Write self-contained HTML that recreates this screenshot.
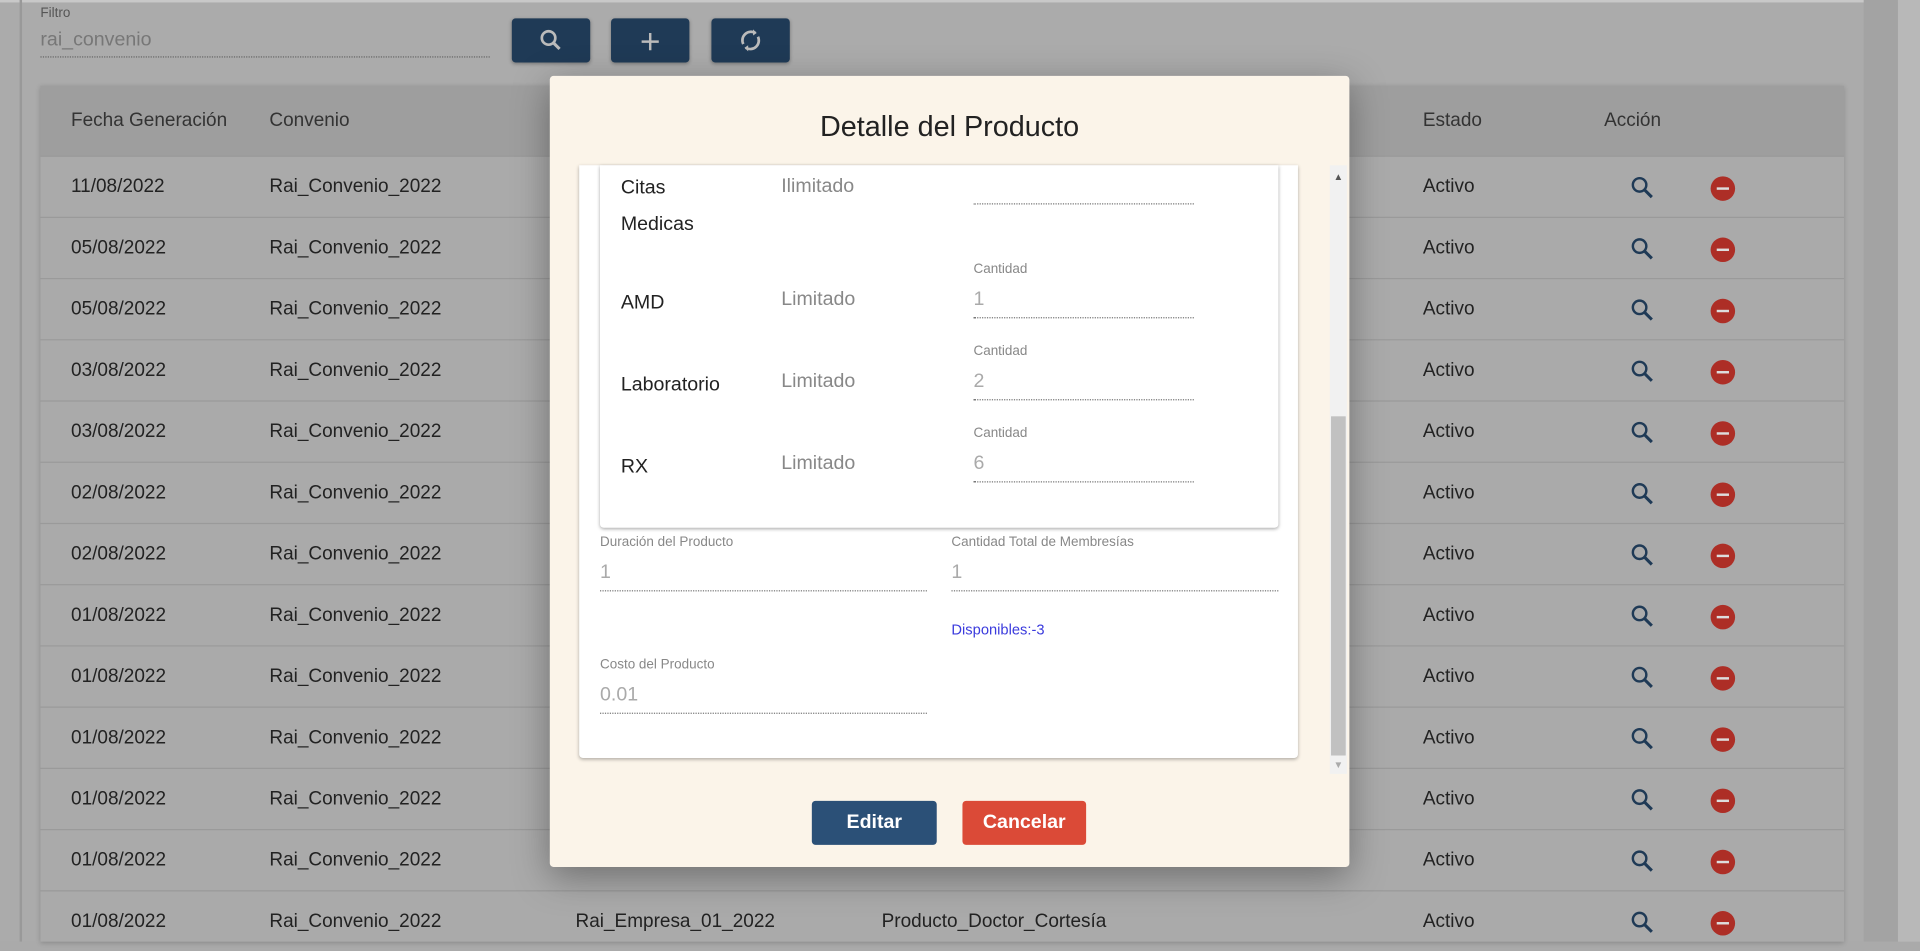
<!DOCTYPE html>
<html><head><meta charset="utf-8"><style>
*{margin:0;padding:0;box-sizing:border-box}
html,body{width:1920px;height:942px;overflow:hidden;background:#aaa;font-family:"Liberation Sans",sans-serif}
#w{position:absolute;left:0;top:0;width:1568px;height:769px;transform:scale(1.22449);transform-origin:0 0;background:#ababab}
.a{position:absolute;white-space:nowrap}
.btn{position:absolute;top:15px;width:64px;height:36px;background:#1f3a56;border-radius:3px;box-shadow:0 1px 3px rgba(0,0,0,.3)}
.row{position:absolute;left:33px;width:1473px;height:50px;border-top:1px solid #9a9a9a;font-size:15.5px;color:#222}
.row span{position:absolute;top:16px}
.dot{position:absolute;border-bottom:1px dotted #777;height:1px}
.lbl{position:absolute;font-size:11px;color:#888;white-space:nowrap}
.val{position:absolute;font-size:16px;color:#aaa;white-space:nowrap}
.mi{position:absolute;width:20px;height:20px;border-radius:50%;background:#ad2e26}
.mi:after{content:"";position:absolute;left:5px;top:9px;width:10px;height:2px;background:#ddd}
</style></head><body><div id="w">
<div class="a" style="left:0;top:0;width:1568px;height:2px;background:#c8c8c8"></div>
<div class="a" style="left:16px;top:0;width:2px;height:769px;background:#999"></div>
<div class="a" style="left:1522px;top:0;width:28px;height:769px;background:#a3a3a3"></div>
<div class="a" style="left:1550px;top:0;width:18px;height:769px;background:#b8b8b8"></div>
<div class="a" style="left:33px;top:5px;font-size:11px;color:#555">Filtro</div>
<div class="a" style="left:33px;top:24px;font-size:16px;color:#777">rai_convenio</div>
<div class="dot" style="left:33px;top:46px;width:367px;border-color:#666"></div>
<div class="btn" style="left:418px"><svg width="64" height="36"><circle cx="30" cy="16" r="5.5" fill="none" stroke="#bbb" stroke-width="2.2"/><line x1="34" y1="20" x2="39" y2="25" stroke="#bbb" stroke-width="2.5"/></svg></div>
<div class="btn" style="left:499px"><svg width="64" height="36"><path d="M32 12v14M25 19h14" stroke="#bbb" stroke-width="2"/></svg></div>
<div class="btn" style="left:581px"><svg width="64" height="36"><path d="M26 21a7 7 0 0 1 10-9M38 15a7 7 0 0 1-10 9" fill="none" stroke="#bbb" stroke-width="2.2"/><path d="M34 9l3 3-3 2zM30 27l-3-3 3-2z" fill="#bbb"/></svg></div>
<div class="a" style="left:33px;top:70px;width:1473px;height:699px;background:#aaa;box-shadow:0 1px 4px rgba(0,0,0,.2)"></div>
<div class="a" style="left:33px;top:70px;width:1473px;height:58px;background:#9e9e9e;font-size:15.5px;color:#333">
<span class="a" style="left:25px;top:20px">Fecha Generación</span><span class="a" style="left:187px;top:20px">Convenio</span><span class="a" style="left:1129px;top:20px">Estado</span><span class="a" style="left:1277px;top:20px">Acción</span></div>
<div id="rows"></div>
<script>
var d=["11/08/2022","05/08/2022","05/08/2022","03/08/2022","03/08/2022","02/08/2022","02/08/2022","01/08/2022","01/08/2022","01/08/2022","01/08/2022","01/08/2022","01/08/2022"],h="";
for(var i=0;i<13;i++){var y=127+i*50;h+='<div class="row" style="top:'+y+'px"><span style="left:25px">'+d[i]+'</span><span style="left:187px">Rai_Convenio_2022</span>'+(i==12?'<span style="left:437px">Rai_Empresa_01_2022</span><span style="left:687px">Producto_Doctor_Cortesía</span>':'')+'<span style="left:1129px">Activo</span><svg class="a" style="left:1298px;top:15px" width="22" height="22"><circle cx="8" cy="8" r="5.5" fill="none" stroke="#1f3a56" stroke-width="2"/><line x1="12" y1="12" x2="18" y2="18" stroke="#1f3a56" stroke-width="2.5"/></svg><div class="mi" style="left:1364px;top:16px"></div></div>'}
document.getElementById('rows').innerHTML=h;
</script>
<div class="a" style="left:449px;top:62px;width:653px;height:646px;background:#fbf4e9;border-radius:3px;box-shadow:0 8px 30px rgba(0,0,0,.35)">
<div class="a" style="left:0;width:653px;top:28px;text-align:center;font-size:23.5px;color:#222">Detalle del Producto</div>
</div>
<div class="a" style="left:473px;top:135px;width:587px;height:484px;background:#fff;border-radius:0 0 3px 3px;box-shadow:0 1px 3px rgba(0,0,0,.3)"></div>
<div class="a" style="left:490px;top:135px;width:554px;height:296px;background:#fff;border-radius:0 0 3px 3px;box-shadow:0 1px 3px rgba(0,0,0,.35)"></div>
<div class="a" style="left:507px;top:145px;font-size:16px;color:#222">Citas</div>
<div class="a" style="left:507px;top:175px;font-size:16px;color:#222">Medicas</div>
<div class="val" style="left:638px;top:144px;color:#888">Ilimitado</div>
<div class="dot" style="left:795px;top:166px;width:180px"></div>
<div class="a" style="left:507px;top:239px;font-size:16px;color:#222">AMD</div>
<div class="val" style="left:638px;top:236px;color:#888">Limitado</div>
<div class="lbl" style="left:795px;top:214px">Cantidad</div><div class="val" style="left:795px;top:236px">1</div>
<div class="dot" style="left:795px;top:259px;width:180px"></div>
<div class="a" style="left:507px;top:306px;font-size:16px;color:#222">Laboratorio</div>
<div class="val" style="left:638px;top:303px;color:#888">Limitado</div>
<div class="lbl" style="left:795px;top:281px">Cantidad</div><div class="val" style="left:795px;top:303px">2</div>
<div class="dot" style="left:795px;top:326px;width:180px"></div>
<div class="a" style="left:507px;top:373px;font-size:16px;color:#222">RX</div>
<div class="val" style="left:638px;top:370px;color:#888">Limitado</div>
<div class="lbl" style="left:795px;top:348px">Cantidad</div><div class="val" style="left:795px;top:370px">6</div>
<div class="dot" style="left:795px;top:393px;width:180px"></div>
<div class="lbl" style="left:490px;top:437px">Duración del Producto</div><div class="val" style="left:490px;top:459px">1</div>
<div class="dot" style="left:490px;top:482px;width:267px"></div>
<div class="lbl" style="left:777px;top:437px">Cantidad Total de Membresías</div><div class="val" style="left:777px;top:459px">1</div>
<div class="dot" style="left:777px;top:482px;width:267px"></div>
<div class="a" style="left:777px;top:507px;font-size:12px;color:#3b3bdd">Disponibles:-3</div>
<div class="lbl" style="left:490px;top:537px">Costo del Producto</div><div class="val" style="left:490px;top:559px">0.01</div>
<div class="dot" style="left:490px;top:582px;width:267px"></div>
<div class="a" style="left:1086px;top:135px;width:14px;height:497px;background:#f1f1f1"></div>
<div class="a" style="left:1087px;top:340px;width:12px;height:277px;background:#c1c1c1"></div>
<div class="a" style="left:1089px;top:140px;font-size:8px;color:#555">▲</div>
<div class="a" style="left:1089px;top:620px;font-size:8px;color:#aaa">▼</div>
<div class="a" style="left:663px;top:654px;width:102px;height:36px;background:#2b5077;border-radius:3px;color:#fff;font-size:16px;font-weight:bold;text-align:center;line-height:36px">Editar</div>
<div class="a" style="left:786px;top:654px;width:101px;height:36px;background:#db4a37;border-radius:3px;color:#fff;font-size:16px;font-weight:bold;text-align:center;line-height:36px">Cancelar</div>
</div></body></html>
